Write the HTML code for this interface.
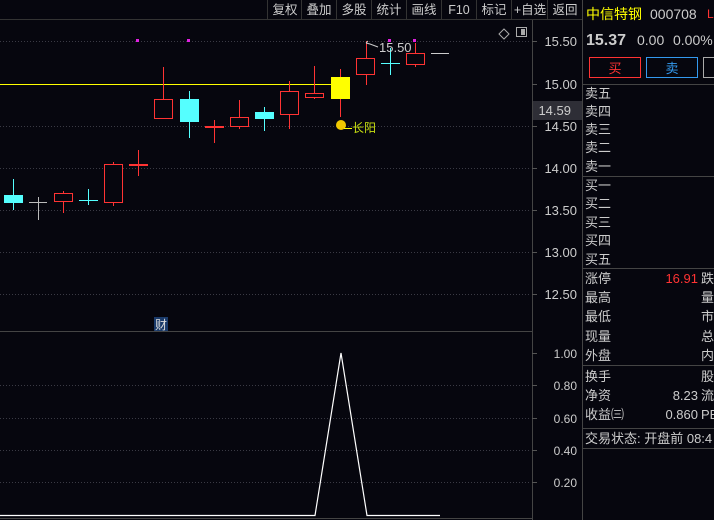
<!DOCTYPE html><html><head><meta charset="utf-8"><style>
body{margin:0;width:714px;height:520px;background:#06060e;overflow:hidden;font-family:"Liberation Sans","Noto Sans CJK SC",sans-serif;}
svg{position:absolute;left:0;top:0}
</style></head><body>
<svg width="714" height="520" viewBox="0 0 714 520" font-family="Liberation Sans, Noto Sans CJK SC, sans-serif">
<rect width="714" height="520" fill="#06060e"/>
<!-- toolbar -->
<line x1="0" y1="19.5" x2="582" y2="19.5" stroke="#333"/>
<g stroke="#333"><line x1="267.5" y1="0" x2="267.5" y2="19"/><line x1="301.5" y1="0" x2="301.5" y2="19"/><line x1="336.5" y1="0" x2="336.5" y2="19"/><line x1="371.5" y1="0" x2="371.5" y2="19"/><line x1="406.5" y1="0" x2="406.5" y2="19"/><line x1="441.5" y1="0" x2="441.5" y2="19"/><line x1="476.5" y1="0" x2="476.5" y2="19"/><line x1="511.5" y1="0" x2="511.5" y2="19"/><line x1="547.5" y1="0" x2="547.5" y2="19"/></g>
<g fill="#ccc" font-size="12.5" text-anchor="middle">
<text x="285" y="14">复权</text><text x="319" y="14">叠加</text><text x="354" y="14">多股</text><text x="389" y="14">统计</text><text x="424" y="14">画线</text><text x="459" y="14">F10</text><text x="494" y="14">标记</text><text x="530" y="14">+自选</text><text x="565" y="14">返回</text></g>
<!-- icons -->
<path d="M504 29 L509 34 L504 39 L499 34Z" fill="none" stroke="#aaa"/>
<rect x="516.5" y="27.5" width="10" height="9" fill="none" stroke="#aaa"/><rect x="521" y="29" width="4" height="6" fill="#aaa"/>
<!-- grid -->
<g stroke="#3a3a44" stroke-dasharray="1 2">
<line x1="0" y1="126.5" x2="531" y2="126.5"/><line x1="0" y1="168.5" x2="531" y2="168.5"/><line x1="0" y1="210.5" x2="531" y2="210.5"/><line x1="0" y1="252.5" x2="531" y2="252.5"/><line x1="0" y1="294.5" x2="531" y2="294.5"/><line x1="0" y1="41.5" x2="531" y2="41.5"/>
<line x1="0" y1="385.5" x2="531" y2="385.5"/><line x1="0" y1="418.5" x2="531" y2="418.5"/><line x1="0" y1="450.5" x2="531" y2="450.5"/><line x1="0" y1="482.5" x2="531" y2="482.5"/></g>
<line x1="532.5" y1="20" x2="532.5" y2="520" stroke="#444"/>
<line x1="582.5" y1="0" x2="582.5" y2="520" stroke="#444"/>
<line x1="0" y1="331.5" x2="532" y2="331.5" stroke="#444"/>
<!-- axis ticks/labels -->
<g stroke="#555"><line x1="532" y1="41.5" x2="537" y2="41.5"/><line x1="532" y1="84.5" x2="537" y2="84.5"/><line x1="532" y1="126.5" x2="537" y2="126.5"/><line x1="532" y1="168.5" x2="537" y2="168.5"/><line x1="532" y1="210.5" x2="537" y2="210.5"/><line x1="532" y1="252.5" x2="537" y2="252.5"/><line x1="532" y1="294.5" x2="537" y2="294.5"/>
<line x1="532" y1="353.5" x2="537" y2="353.5"/><line x1="532" y1="385.5" x2="537" y2="385.5"/><line x1="532" y1="418.5" x2="537" y2="418.5"/><line x1="532" y1="450.5" x2="537" y2="450.5"/><line x1="532" y1="482.5" x2="537" y2="482.5"/></g>
<rect x="533" y="101" width="49" height="19" fill="#2e2e36"/>
<g fill="#ccc" font-size="13" text-anchor="end">
<text x="577" y="46">15.50</text><text x="577" y="89">15.00</text><text x="571" y="115">14.59</text><text x="577" y="131">14.50</text><text x="577" y="173">14.00</text><text x="577" y="215">13.50</text><text x="577" y="257">13.00</text><text x="577" y="299">12.50</text>
<text x="577" y="358" font-size="12">1.00</text><text x="577" y="390" font-size="12">0.80</text><text x="577" y="423" font-size="12">0.60</text><text x="577" y="455" font-size="12">0.40</text><text x="577" y="487" font-size="12">0.20</text></g>
<!-- yellow line -->
<line x1="0" y1="84.5" x2="331" y2="84.5" stroke="#ffff00"/>
<!-- candles -->
<g stroke-width="1">
<line x1="13.5" y1="179" x2="13.5" y2="210" stroke="#55ffff"/><rect x="4" y="195" width="19" height="8" fill="#55ffff"/>
<line x1="38.5" y1="197" x2="38.5" y2="220" stroke="#bbb"/><line x1="29" y1="202.5" x2="47" y2="202.5" stroke="#bbb"/>
<line x1="63.5" y1="191" x2="63.5" y2="213" stroke="#ff3333"/><rect x="54.5" y="193.5" width="18" height="8" fill="#06060e" stroke="#ff3333"/>
<line x1="88.5" y1="189" x2="88.5" y2="205" stroke="#55ffff"/><line x1="79" y1="200.5" x2="98" y2="200.5" stroke="#55ffff"/>
<line x1="113.5" y1="162" x2="113.5" y2="206" stroke="#ff3333"/><rect x="104.5" y="164.5" width="18" height="38" fill="#06060e" stroke="#ff3333"/>
<line x1="138.5" y1="150" x2="138.5" y2="176" stroke="#ff3333"/><rect x="129" y="164" width="19" height="2" fill="#ff3333"/>
<line x1="163.5" y1="67" x2="163.5" y2="118" stroke="#ff3333"/><rect x="154.5" y="99.5" width="18" height="19" fill="#06060e" stroke="#ff3333"/>
<line x1="189.5" y1="91" x2="189.5" y2="138" stroke="#55ffff"/><rect x="180" y="99" width="19" height="23" fill="#55ffff"/>
<line x1="214.5" y1="120" x2="214.5" y2="143" stroke="#ff3333"/><rect x="205" y="126" width="19" height="2" fill="#ff3333"/>
<line x1="239.5" y1="100" x2="239.5" y2="129" stroke="#ff3333"/><rect x="230.5" y="117.5" width="18" height="9" fill="#06060e" stroke="#ff3333"/>
<line x1="264.5" y1="107" x2="264.5" y2="131" stroke="#55ffff"/><rect x="255" y="112" width="19" height="7" fill="#55ffff"/>
<line x1="289.5" y1="81" x2="289.5" y2="129" stroke="#ff3333"/><rect x="280.5" y="91.5" width="18" height="23" fill="#06060e" stroke="#ff3333"/>
<line x1="314.5" y1="66" x2="314.5" y2="99" stroke="#ff3333"/><rect x="305.5" y="93.5" width="18" height="4" fill="#06060e" stroke="#ff3333"/>
<line x1="340.5" y1="69" x2="340.5" y2="117" stroke="#ff3333"/><rect x="331" y="77" width="19" height="22" fill="#ffff00"/>
<line x1="366.5" y1="41" x2="366.5" y2="85" stroke="#ff3333"/><rect x="356.5" y="58.5" width="18" height="16" fill="#06060e" stroke="#ff3333"/>
<line x1="390.5" y1="48" x2="390.5" y2="75" stroke="#55ffff"/><line x1="381" y1="63.5" x2="400" y2="63.5" stroke="#55ffff"/>
<line x1="415.5" y1="43" x2="415.5" y2="67" stroke="#ff3333"/><rect x="406.5" y="53.5" width="18" height="11" fill="#06060e" stroke="#ff3333"/>
<line x1="431" y1="53.5" x2="449" y2="53.5" stroke="#ccc"/>
</g>
<g fill="#e020e0"><rect x="136" y="39" width="3" height="3"/><rect x="187" y="39" width="3" height="3"/><rect x="388" y="39" width="3" height="3"/><rect x="413" y="39" width="3" height="3"/></g>
<path d="M366 43 L368 41 M366 43 L370 44 L378 47" stroke="#ccc" fill="none"/>
<text x="379" y="52" fill="#ccc" font-size="13">15.50</text>
<circle cx="341" cy="125" r="5" fill="#f0c800"/><line x1="344" y1="128.5" x2="352" y2="128.5" stroke="#ff0"/>
<text x="352" y="132" fill="#c8e010" font-size="12">长阳</text>
<rect x="154" y="317" width="14" height="14" fill="#1a3a6a"/><text x="155" y="329" fill="#ddd" font-size="12">财</text>
<!-- bottom indicator -->
<polyline points="0,515.5 315,515.5 341,353 367,515.5 440,515.5" fill="none" stroke="#fff" stroke-width="1.2"/>
<line x1="0" y1="518.5" x2="532" y2="518.5" stroke="#444"/>
<!-- right panel -->
<text x="586" y="19" fill="#ffff00" font-size="14">中信特钢</text>
<text x="650" y="19" fill="#ccc" font-size="14">000708</text>
<text x="707" y="18" fill="#ff3333" font-size="12">L</text>
<text x="586" y="45" fill="#ccc" font-size="16" font-weight="bold">15.37</text>
<text x="637" y="45" fill="#ccc" font-size="14">0.00</text>
<text x="673" y="45" fill="#ccc" font-size="14">0.00%</text>
<rect x="589.5" y="57.5" width="51" height="20" fill="none" stroke="#ff3333"/><text x="615" y="73" fill="#ff3333" font-size="13" text-anchor="middle">买</text>
<rect x="646.5" y="57.5" width="51" height="20" fill="none" stroke="#3399ee"/><text x="672" y="73" fill="#3399ee" font-size="13" text-anchor="middle">卖</text>
<rect x="703.5" y="57.5" width="20" height="20" fill="none" stroke="#aaa"/>
<g stroke="#444"><line x1="583" y1="84.5" x2="714" y2="84.5"/><line x1="583" y1="176.5" x2="714" y2="176.5"/><line x1="583" y1="268.5" x2="714" y2="268.5"/><line x1="583" y1="365.5" x2="714" y2="365.5"/><line x1="583" y1="428.5" x2="714" y2="428.5"/><line x1="583" y1="448.5" x2="714" y2="448.5"/></g>
<g fill="#ccc" font-size="13">
<text x="585" y="98">卖五</text><text x="585" y="116">卖四</text><text x="585" y="134">卖三</text><text x="585" y="152">卖二</text><text x="585" y="171">卖一</text>
<text x="585" y="190">买一</text><text x="585" y="208">买二</text><text x="585" y="227">买三</text><text x="585" y="245">买四</text><text x="585" y="264">买五</text>
<text x="585" y="283">涨停</text><text x="585" y="302">最高</text><text x="585" y="321">最低</text><text x="585" y="341">现量</text><text x="585" y="360">外盘</text>
<text x="585" y="381">换手</text><text x="585" y="400">净资</text><text x="585" y="419">收益㈢</text>
<text x="585" y="443">交易状态: 开盘前 08:4</text>
<text x="701" y="283">跌</text><text x="701" y="302">量</text><text x="701" y="321">市</text><text x="701" y="341">总</text><text x="701" y="360">内</text><text x="701" y="381">股</text><text x="701" y="400">流</text><text x="701" y="419">PE</text>
<text x="698" y="400" text-anchor="end">8.23</text><text x="698" y="419" text-anchor="end">0.860</text></g>
<text x="698" y="283" fill="#ff3333" font-size="13" text-anchor="end">16.91</text>
</svg>
</body></html>
